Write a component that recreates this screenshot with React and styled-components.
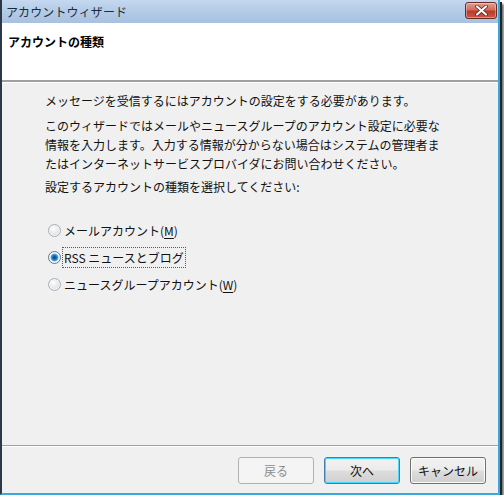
import { createGlobalStyle } from 'styled-components';
import styled from 'styled-components';

const GlobalStyle = createGlobalStyle`
    html, body {
        margin: 0;
        padding: 0;
        background: #ffffff;
    }

    body {
        font-family: "Noto Sans CJK JP", "Noto Sans", sans-serif;
        font-size: 12px;
        color: #111111;
    }
`

const options = [
    { id: 'mail', label: 'メールアカウント(', key: 'M', tail: ')', checked: false },
    { id: 'rss', label: 'RSS ニュースとブログ', checked: true },
    { id: 'news', label: 'ニュースグループアカウント(', key: 'W', tail: ')', checked: false },
];

export default function App() {
    return (
        <>
            <GlobalStyle />
            <Window>
                <TitleBar>
                    <TitleText>アカウントウィザード</TitleText>
                    <CloseButton aria-label="閉じる">
                        <svg width="13" height="11" viewBox="0 0 13 11">
                            <path d="M2 1.5 L11 9.5 M11 1.5 L2 9.5" stroke="#5a1a14" strokeWidth="3.6" strokeLinecap="round" />
                            <path d="M2 1.5 L11 9.5 M11 1.5 L2 9.5" stroke="#ffffff" strokeWidth="2.2" strokeLinecap="round" />
                        </svg>
                    </CloseButton>
                </TitleBar>

                <Header>
                    <h1>アカウントの種類</h1>
                </Header>

                <Content>
                    <Paragraph>メッセージを受信するにはアカウントの設定をする必要があります。</Paragraph>
                    <Paragraph $gap={6}>
                        このウィザードではメールやニュースグループのアカウント設定に必要な<br />
                        情報を入力します。入力する情報が分からない場合はシステムの管理者ま<br />
                        たはインターネットサービスプロバイダにお問い合わせください。
                    </Paragraph>
                    <Paragraph $gap={4}>設定するアカウントの種類を選択してください:</Paragraph>

                    <RadioList>
                        {options.map((op) => (
                            <RadioRow key={op.id}>
                                <RadioDot $checked={op.checked} />
                                <RadioLabel $focused={op.checked}>
                                    {op.label}
                                    {op.key && <u>{op.key}</u>}
                                    {op.tail}
                                </RadioLabel>
                            </RadioRow>
                        ))}
                    </RadioList>
                </Content>

                <Footer>
                    <Button disabled>戻る</Button>
                    <Button $primary>次へ</Button>
                    <Button>キャンセル</Button>
                </Footer>
            </Window>
        </>
    )
}

const Window = styled.div`
    width: 496px;
    height: 493px;

    display: flex;
    flex-direction: column;

    border-left: 2px solid #2c3847;
    border-right: 2px solid #39a9dc;
    border-bottom: 2px solid #39a9dc;

    background: #f0f0f0;

    box-shadow: 2px 2px 0 #1f262e, 4px 4px 2px rgba(0, 0, 0, 0.55);
`

const TitleBar = styled.div`
    height: 23px;
    flex-shrink: 0;

    display: flex;
    align-items: center;
    justify-content: space-between;

    padding: 0 1px 0 4px;

    background: linear-gradient(to bottom, #c4d8ef 0%, #b3cbe7 50%, #a7c1e0 100%);
`

const TitleText = styled.span`
    font-size: 12px;
    color: #1f2a36;
    letter-spacing: 0.01em;
`

const CloseButton = styled.div`
    width: 30px;
    height: 15px;

    display: flex;
    align-items: center;
    justify-content: center;

    margin-top: -2px;

    border: 1px solid #6b2b25;
    border-radius: 3px;

    background: linear-gradient(to bottom, #e39f91 0%, #d16c5b 45%, #bd3a28 55%, #c9594a 100%);
    box-shadow: inset 0 0 0 1px rgba(255, 255, 255, 0.35);
`

const Header = styled.div`
    height: 59px;
    flex-shrink: 0;

    padding: 11px 6px 0 6px;
    box-sizing: border-box;

    background: #ffffff;
    border-bottom: 2px solid #a0a0a0;
    box-shadow: 0 1px 0 #ffffff;

    h1 {
        margin: 0;
        font-size: 12px;
        font-weight: 700;
        line-height: 16px;
        color: #000000;
    }
`

const Content = styled.div`
    flex: 1;

    padding: 9px 0 0 43px;
`

const Paragraph = styled.p`
    margin: ${(p) => p.$gap || 0}px 0 0 0;

    font-size: 12px;
    line-height: 19px;
    color: #111111;
`

const RadioList = styled.div`
    display: flex;
    flex-direction: column;
    gap: 6px;

    margin-top: 24px;
    margin-left: 3px;
`

const RadioRow = styled.label`
    height: 21px;

    display: flex;
    align-items: center;
    gap: 2px;
`

const RadioDot = styled.span`
    width: 11px;
    height: 11px;
    flex-shrink: 0;

    border-radius: 50%;
    border: 1px solid ${(p) => (p.$checked ? '#6a7682' : '#a6aeb6')};

    background: ${(p) =>
        p.$checked
            ? 'radial-gradient(circle at 50% 50%, #0b3f7a 0px, #1c6fc2 2px, #57a9ea 3.5px, #ffffff 4.5px, #e6e9ec 100%)'
            : 'radial-gradient(circle at 40% 35%, #ffffff 0px, #ececec 4px, #d4d8dc 100%)'};
    box-shadow: inset 0 0 0 1px #f6f6f6;
`

const RadioLabel = styled.span`
    padding: 1px 1px;

    font-size: 12px;
    line-height: 17px;
    color: #111111;

    outline: ${(p) => (p.$focused ? '1px dotted #5a5a5a' : 'none')};

    u {
        text-underline-offset: 2px;
    }
`

const Footer = styled.div`
    height: 48px;
    flex-shrink: 0;

    display: flex;
    justify-content: flex-end;
    gap: 10px;

    padding: 11px 12px 0 0;
    box-sizing: border-box;

    border-top: 1px solid #a0a0a0;
    box-shadow: inset 0 1px 0 #ffffff;
`

const Button = styled.button`
    width: 76px;
    height: 27px;

    font-family: "Noto Sans CJK JP", "Noto Sans", sans-serif;
    font-size: 12px;
    color: #111111;

    border: 1px solid ${(p) => (p.$primary ? '#3c7fb1' : '#707070')};
    border-radius: 3px;

    background: linear-gradient(to bottom, #f2f2f2 0%, #ebebeb 48%, #dddddd 52%, #cfcfcf 100%);
    box-shadow: inset 0 0 0 1px ${(p) => (p.$primary ? '#48d8fb' : '#fcfcfc')};

    &:disabled {
        color: #8d8d8d;
        border-color: #adb2b5;
        background: #f4f4f4;
        box-shadow: none;
    }
`
